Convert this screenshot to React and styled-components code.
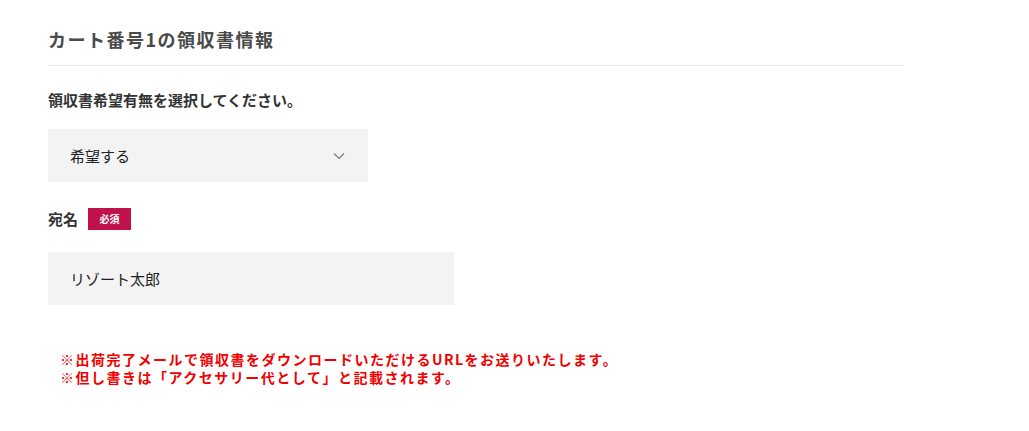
import React, { useState } from "react"
import styled, { createGlobalStyle } from "styled-components"

const GlobalStyle = createGlobalStyle`
  body {
    margin: 0;
    background: #fff;
    font-family: "Noto Sans CJK JP", "Noto Sans", sans-serif;
    color: #333;
  }
`

const Section = styled.section`
  width: 856px;
  padding: 26px 0 0 48px;
`

const Title = styled.h2`
  margin: 0;
  padding-bottom: 13px;
  font-size: 18px;
  line-height: 26px;
  letter-spacing: 1.5px;
  font-weight: bold;
  color: #4a4a4a;
  border-bottom: 1px solid #e6e6e6;
`

const Label = styled.div`
  display: flex;
  align-items: center;
  gap: 10px;
  margin-top: ${p => p.$top}px;
  font-size: 15px;
  line-height: 22px;
  font-weight: bold;
  color: #333;
`

const Badge = styled.span`
  display: inline-flex;
  align-items: center;
  justify-content: center;
  width: 43px;
  height: 22px;
  background: #c0124a;
  color: #fff;
  font-size: 10px;
  font-weight: bold;
`

const Field = styled.div`
  position: relative;
  box-sizing: border-box;
  width: ${p => p.$width}px;
  height: 53px;
  margin-top: ${p => p.$top}px;
  padding: 0 22px;
  display: flex;
  align-items: center;
  background: #f3f3f3;
  font-size: 15px;
  color: #222;
`

const Chevron = styled.svg`
  position: absolute;
  right: 23px;
  top: 23px;
`

const TextInput = styled.input`
  border: none;
  outline: none;
  background: transparent;
  width: 100%;
  padding: 0;
  font: inherit;
  color: inherit;
`

const Notes = styled.div`
  margin: 45px 0 0 12px;
  font-size: 14px;
  line-height: 18px;
  letter-spacing: 1.5px;
  font-weight: bold;
  color: #f00000;
`

export default function App() {
  const [name, setName] = useState("リゾート太郎")
  return (
    <>
      <GlobalStyle />
      <Section>
        <Title>カート番号1の領収書情報</Title>
        <Label $top={23}>領収書希望有無を選択してください。</Label>
        <Field $width={320} $top={18}>
          希望する
          <Chevron width="12" height="8" viewBox="0 0 12 8">
            <path d="M1 1.5 L6 6.5 L11 1.5" fill="none" stroke="#777" strokeWidth="1.1" />
          </Chevron>
        </Field>
        <Label $top={26}>
          宛名<Badge>必須</Badge>
        </Label>
        <Field $width={406} $top={22}>
          <TextInput value={name} onChange={e => setName(e.target.value)} />
        </Field>
        <Notes>
          ※出荷完了メールで領収書をダウンロードいただけるURLをお送りいたします。
          <br />
          ※但し書きは「アクセサリー代として」と記載されます。
        </Notes>
      </Section>
    </>
  )
}
